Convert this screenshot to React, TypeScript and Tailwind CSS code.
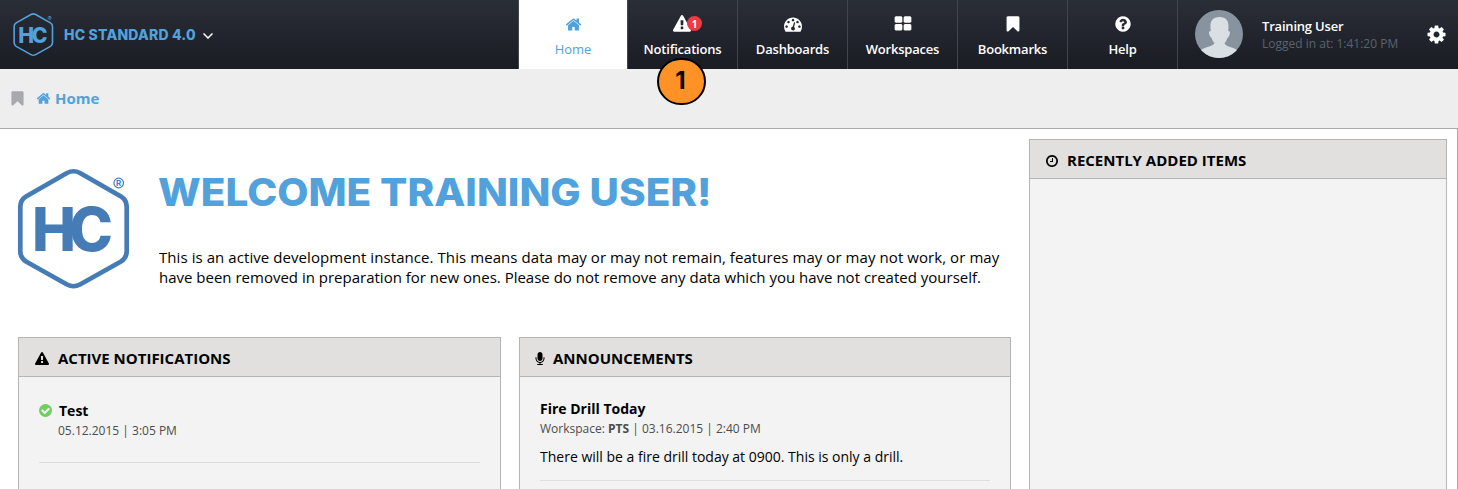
import type { ReactNode } from "react";

const ICONS = {
  home: "M1472 992v480q0 26-19 45t-45 19h-384v-384h-256v384h-384q-26 0-45-19t-19-45v-480q0-1 .5-3t.5-3l575-474 575 474q1 2 1 6zm223-69l-62 74q-8 9-21 11h-3q-13 0-21-7l-692-577-692 577q-12 8-24 7-13-2-21-11l-62-74q-8-10-7-23.5t11-21.5l719-599q32-26 76-26t76 26l244 204v-195q0-14 9-23t23-9h192q14 0 23 9t9 23v408l219 182q10 8 11 21.5t-7 23.5z",
  warning: "M1024 1375v-190q0-14-9.5-23.5t-22.5-9.5h-192q-13 0-22.5 9.5t-9.5 23.5v190q0 14 9.5 23.5t22.5 9.5h192q13 0 22.5-9.5t9.5-23.5zm-2-374l18-459q0-12-10-19-13-11-24-11h-220q-11 0-24 11-10 7-10 21l17 457q0 10 10 16.5t24 6.5h185q14 0 23.5-6.5t10.5-16.5zm-14-934l768 1408q35 63-2 126-17 29-46.5 46t-63.5 17h-1536q-34 0-63.5-17t-46.5-46q-37-63-2-126l768-1408q17-31 47-49t65-18 65 18 47 49z",
  help: "M1024 1376v-192q0-14-9-23t-23-9h-192q-14 0-23 9t-9 23v192q0 14 9 23t23 9h192q14 0 23-9t9-23zm256-672q0-88-55.5-163t-138.5-116-170-41q-243 0-371 213-15 24 8 42l132 100q7 6 19 6 16 0 25-12 53-68 86-92 34-24 86-24 48 0 85.5 26t37.5 59q0 38-20 61t-68 45q-63 28-115.5 86.5t-52.5 125.5v36q0 14 9 23t23 9h192q14 0 23-9t9-23q0-19 21.5-49.5t54.5-49.5q32-18 49-28.5t46-35 44.5-48 28-60.5 12.5-81zm384 192q0 209-103 385.5t-279.5 279.5-385.5 103-385.5-103-279.5-279.5-103-385.5 103-385.5 279.5-279.5 385.5-103 385.5 103 279.5 279.5 103 385.5z",
  cog: "M1152 896q0-106-75-181t-181-75-181 75-75 181 75 181 181 75 181-75 75-181zm512-109v222q0 12-8 23t-20 13l-185 28q-19 54-39 91 35 50 107 138 10 12 10 25t-9 23q-27 37-99 108t-94 71q-12 0-26-9l-138-108q-44 23-91 38-16 136-29 186-7 28-36 28h-222q-14 0-24.5-8.5t-11.5-21.5l-28-184q-49-16-90-37l-141 107q-10 9-25 9-14 0-25-11-126-114-165-168-7-10-7-23 0-12 8-23 15-21 51-66.5t54-70.5q-27-50-41-99l-183-27q-13-2-21-12.5t-8-23.5v-222q0-12 8-23t19-13l186-28q14-46 39-92-40-57-107-138-10-12-10-24 0-10 9-23 26-36 98.5-107.5t94.5-71.5q13 0 26 10l138 107q44-23 91-38 16-136 29-186 7-28 36-28h222q14 0 24.5 8.5t11.5 21.5l28 184q49 16 90 37l142-107q9-9 24-9 13 0 25 10 129 119 165 170 7 8 7 22 0 12-8 23-15 21-51 66.5t-54 70.5q26 50 41 98l183 28q13 2 21 12.5t8 23.5z",
  bookmark: "M1420 128q23 0 44 9 33 13 52.5 41t19.5 62v1289q0 34-19.5 62t-52.5 41q-19 8-44 8-48 0-83-32l-441-424-441 424q-36 33-83 33-23 0-44-9-33-13-52.5-41t-19.5-62v-1289q0-34 19.5-62t52.5-41q21-9 44-9h1048z",
  grid: "M832 1024v384q0 52-38 90t-90 38h-512q-52 0-90-38t-38-90v-384q0-52 38-90t90-38h512q52 0 90 38t38 90zm0-768v384q0 52-38 90t-90 38h-512q-52 0-90-38t-38-90v-384q0-52 38-90t90-38h512q52 0 90 38t38 90zm896 768v384q0 52-38 90t-90 38h-512q-52 0-90-38t-38-90v-384q0-52 38-90t90-38h512q52 0 90 38t38 90zm0-768v384q0 52-38 90t-90 38h-512q-52 0-90-38t-38-90v-384q0-52 38-90t90-38h512q52 0 90 38t38 90z",
  gauge: "M384 1152q0-53-37.5-90.5t-90.5-37.5-90.5 37.5-37.5 90.5 37.5 90.5 90.5 37.5 90.5-37.5 37.5-90.5zm192-448q0-53-37.5-90.5t-90.5-37.5-90.5 37.5-37.5 90.5 37.5 90.5 90.5 37.5 90.5-37.5 37.5-90.5zm428 481l101-382q6-26-7.5-48.5t-38.5-29.5-48 6.5-30 39.5l-101 382q-60 5-107 43.5t-63 98.5q-20 77 20 146t117 89 146-20 89-117q16-60-6-117t-72-91zm660-33q0-53-37.5-90.5t-90.5-37.5-90.5 37.5-37.5 90.5 37.5 90.5 90.5 37.5 90.5-37.5 37.5-90.5zm-640-640q0-53-37.5-90.5t-90.5-37.5-90.5 37.5-37.5 90.5 37.5 90.5 90.5 37.5 90.5-37.5 37.5-90.5zm448 192q0-53-37.5-90.5t-90.5-37.5-90.5 37.5-37.5 90.5 37.5 90.5 90.5 37.5 90.5-37.5 37.5-90.5zm320 448q0 261-141 483-19 29-54 29h-1402q-35 0-54-29-141-221-141-483 0-182 71-348t191-286 286-191 348-71 348 71 286 191 191 286 71 348z",
  clock: "M1024 544v448q0 14-9 23t-23 9h-320q-14 0-23-9t-9-23v-64q0-14 9-23t23-9h224v-352q0-14 9-23t23-9h64q14 0 23 9t9 23zm416 352q0-148-73-273t-198-198-273-73-273 73-198 198-73 273 73 273 198 198 273 73 273-73 198-198 73-273zm224 0q0 209-103 385.5t-279.5 279.5-385.5 103-385.5-103-279.5-279.5-103-385.5 103-385.5 279.5-279.5 385.5-103 385.5 103 279.5 279.5 103 385.5z",
  mic: "M1472 704v128q0 221-147.5 384.5t-364.5 187.5v132h256q26 0 45 19t19 45-19 45-45 19h-640q-26 0-45-19t-19-45 19-45 45-19h256v-132q-217-24-364.5-187.5t-147.5-384.5v-128q0-26 19-45t45-19 45 19 19 45v128q0 185 131.5 316.5t316.5 131.5 316.5-131.5 131.5-316.5v-128q0-26 19-45t45-19 45 19 19 45zm-256-384v512q0 132-94 226t-226 94-226-94-94-226v-512q0-132 94-226t226-94 226 94 94 226z",
  check: "M1412 734q0-28-18-46l-91-90q-19-19-45-19t-45 19l-408 407-226-226q-19-19-45-19t-45 19l-91 90q-18 18-18 46 0 27 18 45l362 362q19 19 45 19 27 0 46-19l543-543q18-18 18-45zm252 162q0 209-103 385.5t-279.5 279.5-385.5 103-385.5-103-279.5-279.5-103-385.5 103-385.5 279.5-279.5 385.5-103 385.5 103 279.5 279.5 103 385.5z",
};

type IconName = keyof typeof ICONS;

function Icon({ name, className }: { name: IconName; className: string }) {
  return (
    <svg viewBox="0 0 1792 1792" fill="currentColor" overflow="visible" className={`shrink-0 ${className}`}>
      <path d={ICONS[name]} />
    </svg>
  );
}

function Logo({ className, stroke }: { className: string; stroke: number }) {
  return (
    <svg viewBox="0 0 112 122" className={`shrink-0 ${className}`} overflow="visible">
      <path
        d="M49 4Q55.500 .5 62 4L103 27.500Q108.700 31 108.700 38V82Q108.700 89 103 92.500L62 115.500Q55.500 119 49 115.500L8 92.500Q2.300 89 2.300 82V38Q2.300 31 8 27.500Z"
        fill="none"
        stroke="currentColor"
        strokeWidth={stroke}
      />
      <g fill="currentColor" fontFamily="Inter, sans-serif">
        <text transform="translate(14 82) scale(.98 1)" fontSize="60" fontWeight="800" letterSpacing="-6.800">HC</text>
        <text x="98" y="17" fontSize="8" fontWeight="700">R</text>
      </g>
      <circle cx="100.700" cy="14" r="4.800" fill="none" stroke="currentColor" strokeWidth="1.200" />
    </svg>
  );
}

function Tab({ icon, label }: { icon: IconName; label: string }) {
  return (
    <div className="flex h-[69px] w-[110px] flex-col items-center border-l border-[#42454c] pt-[12px]">
      <div className="flex h-[24px] items-center">
        <Icon name={icon} className="size-[18px]" />
      </div>
      <span className="mt-[3px] text-[13px] leading-[20px] font-semibold tracking-[-0.2px]">{label}</span>
    </div>
  );
}

function Panel({ icon, iconClass, title, className, children }: { icon: IconName; iconClass: string; title: string; className: string; children?: ReactNode }) {
  return (
    <section className={`border border-[#b5b5b5] bg-[#f3f3f3] ${className}`}>
      <h2 className="flex h-[39px] items-center border-b border-[#b5b5b5] bg-[#e1e0de] pt-[2px] pl-[16px] text-[15px] leading-[20px] font-bold text-black">
        <Icon name={icon} className={`mt-[1px] ${iconClass}`} />
        <span>{title}</span>
      </h2>
      {children}
    </section>
  );
}

export default function App() {
  return (
    <div className="flex h-[489px] w-[1458px] flex-col overflow-hidden bg-white font-['Open_Sans',sans-serif] text-black">
      <header className="flex h-[69px] shrink-0 bg-linear-to-b from-[#2a2e36] to-[#1a1c24] text-white">
        <div className="flex w-[518px] items-center pl-[13px] text-[#51a2dc]">
          <Logo className="h-[44px] w-[41px]" stroke={4.5} />
          <span className="mb-[1px] ml-[10px] font-['Inter',sans-serif] text-[14px] font-extrabold tracking-[0.2px] whitespace-nowrap">HC STANDARD 4.0</span>
          <svg viewBox="0 0 10 6" className="mt-[3px] ml-[7px] h-[6px] w-[10px] text-white" fill="none" stroke="currentColor" strokeWidth="1.500">
            <path d="M.5.500 5 5 9.500.500" />
          </svg>
        </div>
        <nav className="flex">
          <div className="flex h-[69px] w-[109px] flex-col items-center border-l border-[#42454c] bg-white pt-[12px] text-[#51a2dc]">
            <div className="flex h-[24px] items-center">
              <Icon name="home" className="size-[17px]" />
            </div>
            <span className="mt-[3px] text-[13px] leading-[20px]">Home</span>
          </div>
          <div className="relative flex h-[69px] w-[110px] flex-col items-center border-l border-[#42454c] pt-[12px]">
            <div className="flex h-[24px] items-center pr-[2px]">
              <Icon name="warning" className="size-[18px]" />
            </div>
            <span className="mt-[3px] text-[13px] leading-[20px] font-semibold tracking-[-0.2px]">Notifications</span>
            <span className="absolute top-[16px] left-[59px] flex size-[15px] items-center justify-center rounded-full bg-[#ee3b43] text-[10px] leading-none font-bold">1</span>
            <span className="absolute top-[58px] left-[29px] z-10 flex h-[47px] w-[49px] items-center justify-center rounded-full border-2 border-black bg-[#ff9226] pr-[2px] pb-[1px] font-['Inter',sans-serif] text-[24px] leading-none font-bold text-black">1</span>
          </div>
          <Tab icon="gauge" label="Dashboards" />
          <Tab icon="grid" label="Workspaces" />
          <Tab icon="bookmark" label="Bookmarks" />
          <Tab icon="help" label="Help" />
        </nav>
        <div className="flex flex-1 items-center border-l border-[#42454c] pl-[17px]">
          <svg viewBox="0 0 48 48" className="mb-[1px] size-[48px] rounded-full bg-[#8893a0]">
            <path d="M24.500 7c6.500 0 9.300 4 9 9.500l-.3 4.500c1.800 0 2 1.300 1.600 3-.5 2.300-1.500 3.500-2.400 4-.6 2.200-1.700 4-2.900 5.200.4 1.800 3 3 6.500 4 3 1 5 1.800 6.500 3.300L38 48H10L5.500 40c2-1.200 4-2 7-3 3.500-1 6.500-2.300 7-4-1.300-1.200-2.400-3-3-5.200-.9-.5-1.900-1.700-2.400-4-.4-1.700-.1-2.800 1.600-2.800l-.3-4.500C15.200 11 18 7 24.500 7z" fill="#d9dfe3" />
          </svg>
          <div className="ml-[19px] w-[164px]">
            <div className="text-[13px] leading-[17px] font-semibold tracking-[-0.2px]">Training User</div>
            <div className="text-[12px] leading-[17px] text-[#58646d]">Logged in at: 1:41:20 PM</div>
          </div>
          <Icon name="cog" className="mb-[1px] size-[21px]" />
        </div>
      </header>

      <div className="flex h-[60px] shrink-0 items-center border-b border-[#aaa] bg-[#eee] pl-[9px] text-[#51a2dc]">
        <Icon name="bookmark" className="size-[17px] text-[#a8a9ad]" />
        <Icon name="home" className="ml-[10px] size-[15px]" />
        <span className="ml-[4px] text-[15px] font-bold">Home</span>
      </div>

      <main className="flex h-[360px] border-r border-[#aaa] pl-[18px]">
        <div className="flex w-[993px] flex-col">
          <div className="flex h-[208px]">
            <Logo className="mt-[40px] h-[122px] w-[112px] text-[#457cb6]" stroke={4.7} />
            <div className="ml-[29px] pt-[39px]">
              <h1 className="-ml-px w-max origin-left scale-x-[1.05] font-['Inter',sans-serif] text-[38.5px] leading-[48px] font-extrabold whitespace-nowrap text-[#51a2dc]">WELCOME TRAINING USER!</h1>
              <p className="mt-[31px] text-[15px] leading-[20px] whitespace-nowrap">
                <span className="tracking-[0.07px]">This is an active development instance. This means data may or may not remain, features may or may not work, or may</span>
                <br />
                <span>have been removed in preparation for new ones. Please do not remove any data which you have not created yourself.</span>
              </p>
            </div>
          </div>
          <div className="flex h-[152px] gap-[18px]">
            <Panel icon="warning" iconClass="mr-[9px] size-[14px]" title="ACTIVE NOTIFICATIONS" className="w-[483px] border-b-0">
              <div className="mx-[20px] h-[86px] border-b border-[#dedede] pt-[24px]">
                <div className="flex items-center text-[14px] leading-[20px] font-bold">
                  <Icon name="check" className="-ml-[1px] mr-[6px] mb-[1px] size-[15px] text-[#70cf5e]" />
                  <span>Test</span>
                </div>
                <div className="pl-[19px] text-[12px] leading-[20px] text-[#4c4c4c]">05.12.2015 | 3:05 PM</div>
              </div>
            </Panel>
            <Panel icon="mic" iconClass="-ml-[3px] mr-[6px] size-[14px]" title="ANNOUNCEMENTS" className="w-[492px] border-b-0">
              <div className="mx-[20px] h-[104px] border-b border-[#dedede] pt-[22px]">
                <div className="text-[14px] leading-[20px] font-bold">Fire Drill Today</div>
                <div className="text-[12px] leading-[19px] text-[#4c4c4c]">Workspace: <b>PTS</b> | 03.16.2015 | 2:40 PM</div>
                <p className="mt-[9px] text-[14px] leading-[20px]">There will be a fire drill today at 0900. This is only a drill.</p>
              </div>
            </Panel>
          </div>
        </div>
        <Panel icon="clock" iconClass="-ml-[1px] mr-[8px] size-[14px]" title="RECENTLY ADDED ITEMS" className="mt-[10px] ml-[18px] w-[418px] border-b-0" />
      </main>
    </div>
  );
}
